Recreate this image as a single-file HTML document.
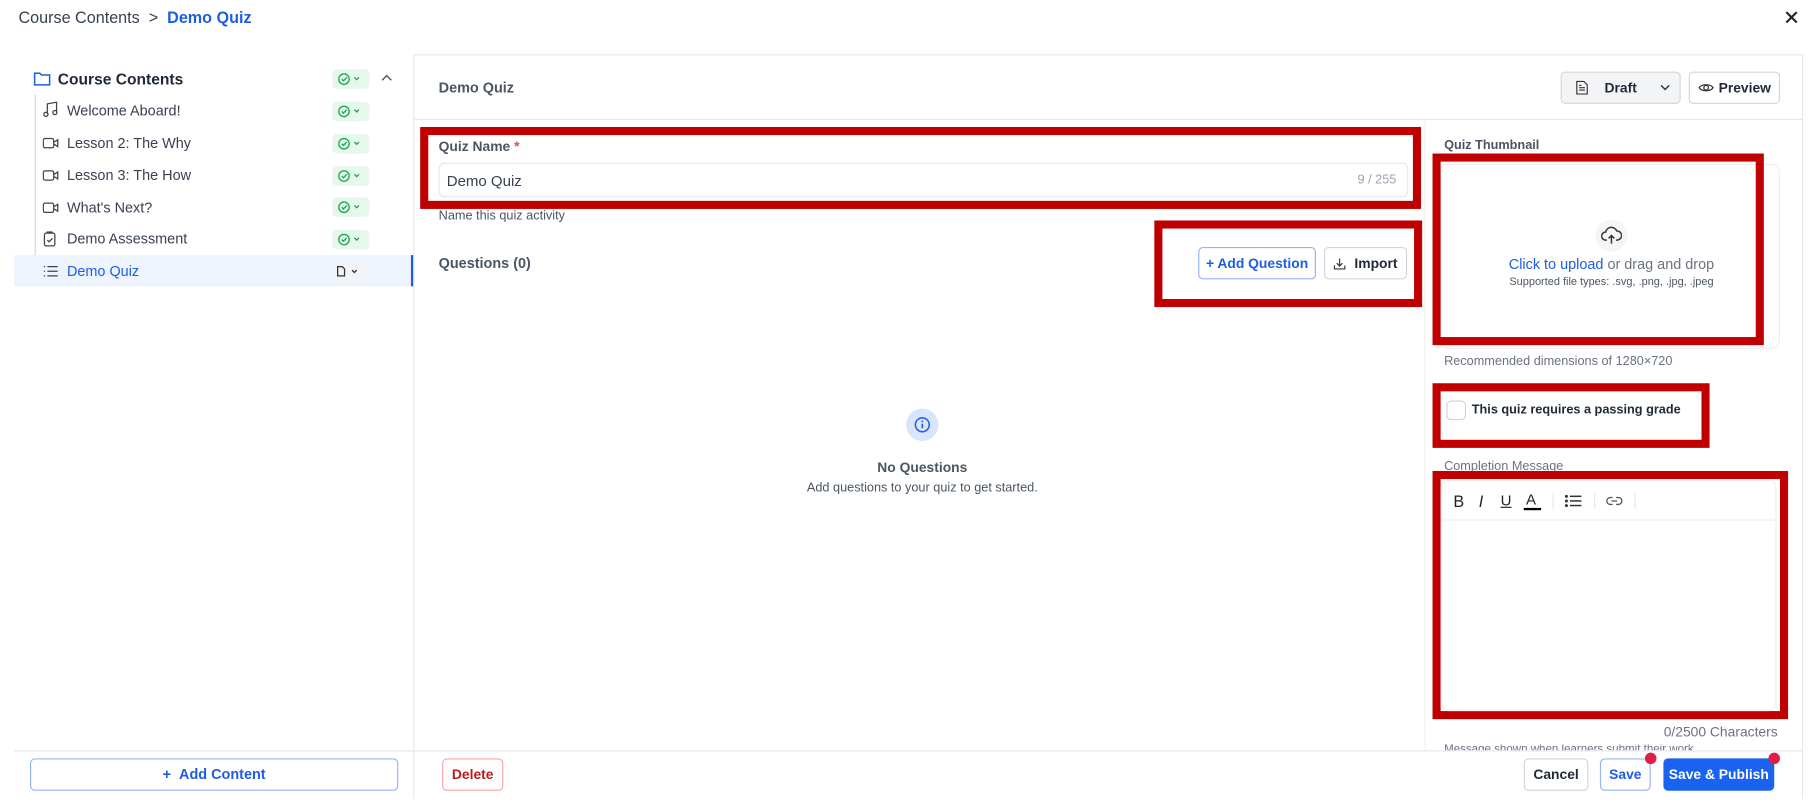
<!DOCTYPE html>
<html><head><meta charset="utf-8"><style>
html,body{margin:0;padding:0;width:1810px;height:806px;overflow:hidden;background:#fff}
#w{position:absolute;left:0;top:0;width:1568px;height:698px;transform:scale(1.15434);transform-origin:0 0;font-family:"Liberation Sans",sans-serif;color:#1f2937}
.a{position:absolute}
.t{position:absolute;white-space:nowrap;line-height:1}
.red{position:absolute;border:7px solid #c00000;box-sizing:border-box}
.badge{position:absolute;left:288px;width:32px;height:17px;background:#e6f7ec;border-radius:4px}
.btn{position:absolute;box-sizing:border-box;border:1px solid #d1d5db;border-radius:4px;background:#fff;font-size:12px;font-weight:bold;display:flex;align-items:center;justify-content:center}
.row{position:absolute;left:58px;font-size:12.5px;color:#374151}
.ic{position:absolute}
</style></head><body><div id="w">
<div class="t" style="left:16px;top:8px;font-size:14px;color:#374151">Course Contents&nbsp;&nbsp;&gt;&nbsp;&nbsp;<b style="color:#1d5ce6">Demo Quiz</b></div>
<svg class="ic" style="left:1546px;top:9px" width="12" height="12" viewBox="0 0 12 12"><path d="M1.5 1.5L10.5 10.5M10.5 1.5L1.5 10.5" stroke="#222" stroke-width="1.8"/></svg>

<!-- sidebar -->
<svg class="ic" style="left:29px;top:61px" width="15" height="14" viewBox="0 0 15 14"><path d="M1 2.5h4.5l1.5 1.5h7v8.5H1z" fill="none" stroke="#1d5ce6" stroke-width="1.3"/></svg>
<div class="t" style="left:50px;top:62px;font-size:13.5px;font-weight:bold;color:#1f2937">Course Contents</div>
<svg class="ic" style="left:330px;top:64px" width="10" height="7" viewBox="0 0 10 7"><path d="M1 5.5L5 1.5L9 5.5" fill="none" stroke="#555" stroke-width="1.2"/></svg>
<div class="a" style="left:30px;top:82px;width:1px;height:166px;background:#d1d5db"></div>
<div class="a" style="left:12px;top:221px;width:346px;height:27px;background:#eef4fd"></div>
<div class="a" style="left:356px;top:221px;width:2px;height:27px;background:#1d5ce6"></div>
<div class="badge" style="top:60px"></div><div class="badge" style="top:88px"></div><div class="badge" style="top:116px"></div><div class="badge" style="top:144px"></div><div class="badge" style="top:171px"></div><div class="badge" style="top:199px"></div><div class="badge" style="top:227px;background:#f1f3f6"></div>
<svg class="ic" style="left:291px;top:62px" width="28" height="190" viewBox="0 0 28 190">
<g fill="none" stroke="#16a34a" stroke-width="1.1">
<circle cx="7" cy="6.5" r="4.5"/><path d="M5 6.5l1.5 1.5 3-3"/><path d="M16 5l2 2 2-2"/>
<g transform="translate(0,28)"><circle cx="7" cy="6.5" r="4.5"/><path d="M5 6.5l1.5 1.5 3-3"/><path d="M16 5l2 2 2-2"/></g>
<g transform="translate(0,56)"><circle cx="7" cy="6.5" r="4.5"/><path d="M5 6.5l1.5 1.5 3-3"/><path d="M16 5l2 2 2-2"/></g>
<g transform="translate(0,84)"><circle cx="7" cy="6.5" r="4.5"/><path d="M5 6.5l1.5 1.5 3-3"/><path d="M16 5l2 2 2-2"/></g>
<g transform="translate(0,111)"><circle cx="7" cy="6.5" r="4.5"/><path d="M5 6.5l1.5 1.5 3-3"/><path d="M16 5l2 2 2-2"/></g>
<g transform="translate(0,139)"><circle cx="7" cy="6.5" r="4.5"/><path d="M5 6.5l1.5 1.5 3-3"/><path d="M16 5l2 2 2-2"/></g>
</g>
<g fill="none" stroke="#333" stroke-width="1.1" transform="translate(0,167)"><path d="M1.5 2h4l2 2v6h-6z"/><path d="M14 5l2 2 2-2"/></g>
</svg>
<svg class="ic" style="left:37px;top:88px" width="14" height="156" viewBox="0 0 14 156"><g fill="none" stroke="#444" stroke-width="1.1">
<path d="M4 11V2l8-1.5v9"/><circle cx="2.8" cy="11" r="1.8"/><circle cx="10.5" cy="9.5" r="1.8"/>
<g transform="translate(0,30)"><rect x="0.5" y="2" width="9" height="8" rx="1.5"/><path d="M10 5l3-2v6l-3-2"/></g>
<g transform="translate(0,58)"><rect x="0.5" y="2" width="9" height="8" rx="1.5"/><path d="M10 5l3-2v6l-3-2"/></g>
<g transform="translate(0,86)"><rect x="0.5" y="2" width="9" height="8" rx="1.5"/><path d="M10 5l3-2v6l-3-2"/></g>
<g transform="translate(0,112)"><rect x="1.5" y="2" width="9" height="11" rx="1.5"/><path d="M4 2V1h4v1M4 8l1.5 1.5 3-3"/></g>
<g transform="translate(0,141)"><path d="M4 2h9M4 6h9M4 10h9M1 2h1M1 6h1M1 10h1"/></g>
</g></svg>
<div class="row t" style="top:90px">Welcome Aboard!</div>
<div class="row t" style="top:118px">Lesson 2: The Why</div>
<div class="row t" style="top:146px">Lesson 3: The How</div>
<div class="row t" style="top:174px">What's Next?</div>
<div class="row t" style="top:201px">Demo Assessment</div>
<div class="row t" style="top:229px;color:#1d5ce6">Demo Quiz</div>
<div class="a" style="left:12px;top:650px;width:346px;height:1px;background:#e5e7eb"></div>
<div class="btn" style="left:26px;top:657px;width:319px;height:28px;border-color:#93b4f5;color:#1d5ce6;font-size:12.5px">+&nbsp;&nbsp;Add Content</div>

<!-- main -->
<div class="a" style="left:358px;top:47px;width:1204px;height:645px;border:1px solid #e5e7eb;border-bottom:none;box-sizing:border-box"></div>
<div class="t" style="left:380px;top:70px;font-size:12.5px;font-weight:bold;color:#4b5563">Demo Quiz</div>
<div class="a" style="left:359px;top:103px;width:1203px;height:1px;background:#e5e7eb"></div>
<div class="btn" style="left:1352px;top:62px;width:104px;height:28px;background:#f3f4f6;color:#1f2937;justify-content:flex-start;padding-left:12px">
<svg width="11" height="12" viewBox="0 0 11 12"><path d="M1 .5h6l3 3v8H1z M3 6h5M3 8h5M3 4h2" fill="none" stroke="#333" stroke-width="1"/></svg>
<span style="margin-left:14px">Draft</span><svg style="margin-left:20px" width="9" height="6" viewBox="0 0 9 6"><path d="M1 1l3.5 3.5L8 1" fill="none" stroke="#333" stroke-width="1.2"/></svg></div>
<div class="btn" style="left:1463px;top:62px;width:79px;height:28px;color:#1f2937">
<svg width="14" height="10" viewBox="0 0 14 10"><path d="M1 5C3 1.5 11 1.5 13 5C11 8.5 3 8.5 1 5z" fill="none" stroke="#333" stroke-width="1.1"/><circle cx="7" cy="5" r="2" fill="none" stroke="#333" stroke-width="1.1"/></svg><span style="margin-left:4px">Preview</span></div>
<div class="a" style="left:1234px;top:104px;width:1px;height:546px;background:#f0f0f0"></div>

<div class="red" style="left:364px;top:110px;width:867px;height:71px"></div>
<div class="t" style="left:380px;top:121px;font-size:12px;font-weight:bold;color:#4b5563">Quiz Name <span style="color:#ef4444">*</span></div>
<div class="a" style="left:380px;top:141px;width:840px;height:30px;border:1px solid #e5e7eb;border-radius:5px;box-sizing:border-box"></div>
<div class="t" style="left:387px;top:150px;font-size:13px;color:#374151">Demo Quiz</div>
<div class="t" style="left:1176px;top:151px;font-size:11px;color:#9ca3af">9 / 255</div>
<div class="t" style="left:380px;top:182px;font-size:11px;color:#4b5563">Name this quiz activity</div>
<div class="t" style="left:380px;top:222px;font-size:12.5px;font-weight:bold;color:#4b5563">Questions (0)</div>
<div class="red" style="left:1000px;top:191px;width:232px;height:75px"></div>
<div class="btn" style="left:1038px;top:214px;width:102px;height:28px;border-color:#93b4f5;color:#1d5ce6">+ Add Question</div>
<div class="btn" style="left:1147px;top:214px;width:72px;height:28px;color:#1f2937"><svg width="11" height="11" viewBox="0 0 11 11"><path d="M5.5 1v6M3 5l2.5 2.5L8 5M1 7v3h9V7" fill="none" stroke="#333" stroke-width="1"/></svg><span style="margin-left:7px">Import</span></div>

<div class="a" style="left:785px;top:354px;width:28px;height:28px;border-radius:50%;background:#d9e5fc"></div>
<svg class="ic" style="left:791px;top:360px" width="16" height="16" viewBox="0 0 16 16"><circle cx="8" cy="8" r="6" fill="none" stroke="#1d5ce6" stroke-width="1.3"/><path d="M8 7v4" stroke="#1d5ce6" stroke-width="1.4"/><circle cx="8" cy="5" r=".8" fill="#1d5ce6"/></svg>
<div class="t" style="left:699px;top:399px;width:200px;text-align:center;font-size:12px;font-weight:bold;color:#4b5563">No Questions</div>
<div class="t" style="left:649px;top:418px;width:300px;text-align:center;font-size:11px;color:#4b5563">Add questions to your quiz to get started.</div>

<!-- right column -->
<div class="t" style="left:1251px;top:121px;font-size:11px;font-weight:bold;color:#4b5563">Quiz Thumbnail</div>
<div class="a" style="left:1246px;top:142px;width:296px;height:160px;border:1px solid #eceef1;border-radius:7px;box-sizing:border-box"></div>
<div class="red" style="left:1241px;top:133px;width:287px;height:166px"></div>
<div class="a" style="left:1382px;top:190px;width:28px;height:28px;border-radius:50%;background:#f5f5f6"></div>
<svg class="ic" style="left:1387px;top:196px" width="18" height="16" viewBox="0 0 18 16"><path d="M5 12H4a3.5 3.5 0 0 1 0-7 5 5 0 0 1 9.5-1A3.7 3.7 0 0 1 14 12h-1M9 15V8M6.5 10.5L9 8l2.5 2.5" fill="none" stroke="#333" stroke-width="1.3"/></svg>
<div class="t" style="left:1246px;top:223px;width:300px;text-align:center;font-size:12.5px;color:#6b7280"><span style="color:#1d5ce6">Click to upload</span> or drag and drop</div>
<div class="t" style="left:1246px;top:240px;width:300px;text-align:center;font-size:9.5px;color:#4b5563">Supported file types: .svg, .png, .jpg, .jpeg</div>
<div class="t" style="left:1251px;top:308px;font-size:11px;color:#6b7280">Recommended dimensions of 1280×720</div>
<div class="red" style="left:1241px;top:332px;width:240px;height:56px"></div>
<div class="a" style="left:1253px;top:347px;width:17px;height:17px;border:1px solid #d1d5db;border-radius:4px;box-sizing:border-box"></div>
<div class="t" style="left:1275px;top:350px;font-size:11px;font-weight:bold;color:#1f2937">This quiz requires a passing grade</div>
<div class="t" style="left:1251px;top:399px;font-size:11px;color:#6b7280">Completion Message</div>
<div class="red" style="left:1241px;top:408px;width:308px;height:215px"></div>
<div class="a" style="left:1248px;top:416px;width:291px;height:200px;border:1px solid #eceef1;border-radius:6px;box-sizing:border-box"></div>
<div class="a" style="left:1249px;top:450px;width:289px;height:1px;background:#f0f0f0"></div>
<div class="t" style="left:1259px;top:427px;font-size:14px;color:#222">B</div>
<div class="t" style="left:1281px;top:427px;font-size:14px;font-style:italic;color:#222">I</div>
<div class="t" style="left:1300px;top:427px;font-size:13px;color:#222;text-decoration:underline">U</div>
<div class="t" style="left:1322px;top:426px;font-size:13px;color:#222">A</div>
<div class="a" style="left:1320px;top:440px;width:15px;height:2px;background:#000"></div>
<div class="a" style="left:1345px;top:427px;width:1px;height:14px;background:#e5e7eb"></div>
<svg class="ic" style="left:1355px;top:428px" width="16" height="12" viewBox="0 0 16 12"><g fill="#333"><circle cx="2" cy="2" r="1.3"/><circle cx="2" cy="6" r="1.3"/><circle cx="2" cy="10" r="1.3"/><rect x="5" y="1.3" width="10" height="1.3"/><rect x="5" y="5.3" width="10" height="1.3"/><rect x="5" y="9.3" width="10" height="1.3"/></g></svg>
<div class="a" style="left:1381px;top:427px;width:1px;height:14px;background:#e5e7eb"></div>
<svg class="ic" style="left:1391px;top:430px" width="15" height="8" viewBox="0 0 15 8"><path d="M6 1H4a3 3 0 0 0 0 6h2M9 1h2a3 3 0 0 1 0 6H9M5 4h5" fill="none" stroke="#555" stroke-width="1.1"/></svg>
<div class="a" style="left:1416px;top:427px;width:1px;height:14px;background:#e5e7eb"></div>
<div class="t" style="left:1380px;top:628px;width:160px;text-align:right;font-size:12px;color:#6b7280">0/2500 Characters</div>
<div class="a" style="left:1251px;top:645px;width:280px;height:5px;overflow:hidden"><div class="t" style="left:0;top:0;font-size:10px;color:#6b7280">Message shown when learners submit their work</div></div>

<!-- footer -->
<div class="a" style="left:359px;top:650px;width:1203px;height:1px;background:#e5e7eb"></div>
<div class="btn" style="left:383px;top:657px;width:53px;height:28px;border-color:#fca5a5;color:#b91c1c">Delete</div>
<div class="btn" style="left:1320px;top:657px;width:56px;height:28px;color:#1f2937">Cancel</div>
<div class="btn" style="left:1386px;top:657px;width:44px;height:28px;border-color:#93b4f5;color:#1d5ce6">Save</div>
<div class="btn" style="left:1441px;top:657px;width:96px;height:28px;border:none;background:#1a62f0;color:#fff">Save &amp; Publish</div>
<div class="a" style="left:1425px;top:652px;width:10px;height:10px;border-radius:50%;background:#e11d48"></div>
<div class="a" style="left:1532px;top:652px;width:10px;height:10px;border-radius:50%;background:#e11d48"></div>
</div></body></html>
